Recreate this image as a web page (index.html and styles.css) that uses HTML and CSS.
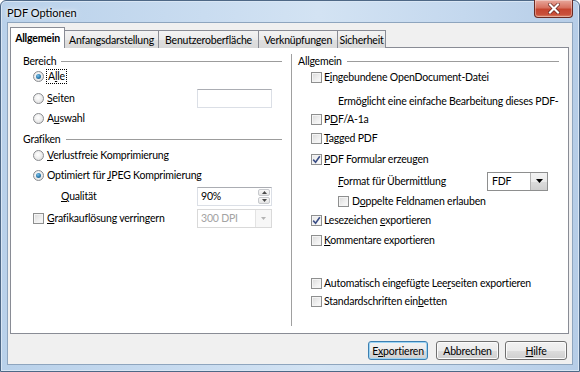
FILE: index.html
```html
<!DOCTYPE html>
<html>
<head>
<meta charset="utf-8">
<title>PDF Optionen</title>
<link rel="stylesheet" href="styles.css">
</head>
<body>
<div class="window">
  <div class="titlebar">
    <span class="title">PDF Optionen</span>
    <div class="close">
      <svg width="12" height="11" viewBox="0 0 12 11"><path d="M2 1.5 L10 9.5 M10 1.5 L2 9.5" stroke="#5a1a14" stroke-width="3.4" stroke-linecap="square"/><path d="M2 1.5 L10 9.5 M10 1.5 L2 9.5" stroke="#fff" stroke-width="2.2" stroke-linecap="square"/></svg>
    </div>
  </div>
  <div class="client">
    <div class="tabs">
      <div class="tab tab-a active">Allgemein</div>
      <div class="tab tab-b">Anfangsdarstellung</div>
      <div class="tab tab-c">Benutzeroberfläche</div>
      <div class="tab tab-d">Verknüpfungen</div>
      <div class="tab tab-e">Sicherheit</div>
    </div>
    <div class="panel">
      <div class="col col-left">
        <div class="hdr"><span>Bereich</span><i></i></div>
        <div class="row item"><span class="radio on"></span><span class="focus">A<u>l</u>le</span></div>
        <div class="row item"><span class="radio"></span><span class="lbl"><u>S</u>eiten</span><span class="edit"></span></div>
        <div class="row item"><span class="radio"></span><span class="lbl">A<u>u</u>swahl</span></div>
        <div class="hdr"><span>Grafiken</span><i></i></div>
        <div class="row item"><span class="radio"></span><span class="lbl"><u>V</u>erlustfreie Komprimierung</span></div>
        <div class="row item"><span class="radio on"></span><span class="lbl">Optimiert für <u>J</u>PEG Komprimierung</span></div>
        <div class="row item sub"><span class="lbl"><u>Q</u>ualität</span>
          <span class="spin"><span class="spin-val">90%</span><span class="spin-btns"><span class="sb"><svg width="5" height="3" viewBox="0 0 5 3"><path d="M0 3 L2.5 0 L5 3Z" fill="#4a4a4a"/></svg></span><span class="sb"><svg width="5" height="3" viewBox="0 0 5 3"><path d="M0 0 L2.5 3 L5 0Z" fill="#4a4a4a"/></svg></span></span></span>
        </div>
        <div class="row item"><span class="check"></span><span class="lbl"><u>G</u>rafikauflösung verringern</span>
          <span class="combo disabled"><span class="combo-val">300 DPI</span><span class="combo-btn"><svg width="5" height="3" viewBox="0 0 5 3"><path d="M0 0 L2.5 3 L5 0Z" fill="#b4b4b4"/></svg></span></span>
        </div>
      </div>
      <div class="sep"></div>
      <div class="col col-right">
        <div class="hdr"><span>Allgemein</span><i></i></div>
        <div class="row item"><span class="check"></span><span class="lbl">E<u>i</u>ngebundene OpenDocument-Datei</span></div>
        <div class="row item indent"><span class="lbl">Ermöglicht eine einfache Bearbeitung dieses PDF-</span></div>
        <div class="row item"><span class="check"></span><span class="lbl">P<u>D</u>F/A-1a</span></div>
        <div class="row item"><span class="check"></span><span class="lbl"><u>T</u>agged PDF</span></div>
        <div class="row item"><span class="check on"><svg width="9" height="9" viewBox="0 0 9 9"><path d="M1.2 4.6 L3.6 7.2 L7.8 1.2" fill="none" stroke="#3b4e86" stroke-width="1.6"/></svg></span><span class="lbl"><u>P</u>DF Formular erzeugen</span></div>
        <div class="row item indent"><span class="lbl"><u>F</u>ormat für Übermittlung</span>
          <span class="combo fdf"><span class="combo-val">FDF</span><span class="combo-btn"><svg width="7" height="4" viewBox="0 0 7 4"><path d="M0 0 L3.5 4 L7 0Z" fill="#000"/></svg></span></span>
        </div>
        <div class="row item indent"><span class="check"></span><span class="lbl">D<u>o</u>ppelte Feldnamen erlauben</span></div>
        <div class="row item"><span class="check on"><svg width="9" height="9" viewBox="0 0 9 9"><path d="M1.2 4.6 L3.6 7.2 L7.8 1.2" fill="none" stroke="#3b4e86" stroke-width="1.6"/></svg></span><span class="lbl">Lesezeichen <u>e</u>xportieren</span></div>
        <div class="row item"><span class="check"></span><span class="lbl"><u>K</u>ommentare exportieren</span></div>
        <div class="row item"><span class="check"></span><span class="lbl">Automatisch eingefügte Lee<u>r</u>seiten exportieren</span></div>
        <div class="row item"><span class="check"></span><span class="lbl">Standardschriften ein<u>b</u>etten</span></div>
      </div>
    </div>
    <div class="buttons">
      <div class="btn btn-default btn-exp">E<u>x</u>portieren</div>
      <div class="btn btn-abb">Abbrechen</div>
      <div class="btn btn-hilfe"><u>H</u>ilfe</div>
    </div>
  </div>
</div>
</body>
</html>
```
FILE: styles.css
```css
* { box-sizing: border-box; }
html, body { margin: 0; padding: 0; }
body {
  width: 580px;
  height: 372px;
  overflow: hidden;
  font-family: Lato, "Noto Sans", sans-serif;
  font-size: 10.5px;
  letter-spacing: -0.2px;
  color: #000;
  background: #fff;
}
u { text-decoration: underline; text-underline-offset: 1px; }

.window {
  width: 580px;
  height: 372px;
  display: flex;
  flex-direction: column;
  border: 1px solid #4e6886;
  border-radius: 6px 6px 0 0;
  background: linear-gradient(90deg, #b9d1ea 0%, #c9dcf0 35%, #d3e3f3 55%, #c4d8ee 80%, #b6cde7 100%);
  box-shadow: inset 0 0 0 1px #d9e6f4;
}
.titlebar {
  height: 21px;
  display: flex;
  align-items: flex-start;
  justify-content: space-between;
  flex: none;
}
.title {
  margin: 5px 0 0 6px;
  font-size: 11px;
  letter-spacing: 0;
  color: #000;
  text-shadow: 0 0 6px #fff, 0 0 3px #fff;
}
.close {
  width: 39px;
  height: 18px;
  margin: -1px 6px 0 0;
  border: 1px solid #6a2a22;
  border-top: none;
  border-radius: 0 0 4px 4px;
  background: linear-gradient(180deg, #e8a89c 0%, #d7715f 45%, #c5452f 55%, #c9503a 85%, #dc8a6c 100%);
  box-shadow: inset 0 0 0 1px rgba(255,255,255,0.35);
  display: flex;
  align-items: center;
  justify-content: center;
}

.client {
  flex: 1;
  margin: 0 6px 6px 6px;
  border: 1px solid #8ea5be;
  background: #f0f0f0;
  padding: 5px 3px 0 2px;
  display: flex;
  flex-direction: column;
}
.tabs {
  height: 20px;
  display: flex;
  align-items: flex-end;
  position: relative;
  z-index: 1;
  margin-bottom: -1px;
  flex: none;
}
.tab {
  height: 18px;
  border: 1px solid #898c95;
  border-bottom: none;
  background: linear-gradient(180deg, #f3f3f3 0%, #ebebeb 50%, #dfdfdf 51%, #d9d9d9 100%);
  display: flex;
  align-items: center;
  justify-content: center;
  margin-left: -1px;
  white-space: nowrap;
  flex: none;
}
.tab-a { width: 55px; margin-left: 0; }
.tab-b { width: 95px; }
.tab-c { width: 101px; }
.tab-d { width: 80px; }
.tab-e { width: 49px; }
.tab.active {
  height: 21px;
  background: #fff;
  font-weight: 700;
  position: relative;
  z-index: 2;
  padding-bottom: 1px;
}

.panel {
  height: 287px;
  flex: none;
  border: 1px solid #898c95;
  background: #fff;
  display: flex;
}
.col { display: grid; align-content: start; }
.col-left {
  width: 280px;
  flex: none;
  padding: 5px 9px 0 0;
  grid-template-rows: 15px 22px 20px 21px 16px 20px 21px 22px 16px;
}
.col-right {
  flex: 1;
  min-width: 0;
  padding: 5px 9px 0 0;
  grid-template-rows: 16px 24px 18px 19px 21px 22px 20px 19px 20px 43px 18px 16px;
}
.sep {
  width: 1px;
  background: #a0a0a0;
  margin: 6px 0 7px 0;
  flex: none;
}
.hdr {
  height: 16px;
  display: flex;
  align-items: center;
  white-space: nowrap;
}
.col-left .hdr { padding-left: 12px; }
.col-right .hdr { padding-left: 6px; }
.hdr i {
  flex: 1;
  height: 1px;
  background: #9c9c9c;
  margin-left: 5px;
}
.row {
  height: 16px;
  display: flex;
  align-items: center;
  white-space: nowrap;
  min-width: 0;
}
.col-left .item { padding-left: 22px; }
.col-right .item { padding-left: 19px; }
.col-left .item.sub { padding-left: 50px; }
.col-right .item.indent { padding-left: 46px; }
.lbl { flex: 1; min-width: 0; }
.focus {
  outline: 1px dotted #000;
  outline-offset: 0;
  padding: 0 1px;
  line-height: 13px;
}

.radio {
  width: 11px;
  height: 11px;
  border-radius: 50%;
  border: 1px solid #8a8c90;
  background: radial-gradient(circle at 45% 40%, #ffffff 0%, #f1f1f1 40%, #d6d6d6 100%);
  margin-right: 3px;
  flex: none;
  display: flex;
  align-items: center;
  justify-content: center;
}
.radio.on::after {
  content: "";
  width: 5px;
  height: 5px;
  border-radius: 50%;
  background: radial-gradient(circle at 40% 35%, #7ec2ea 0%, #2f7fb3 50%, #1d4f72 100%);
}

.check {
  width: 11px;
  height: 11px;
  border: 1px solid #8e8f8f;
  background: linear-gradient(135deg, #d9d9d9 0%, #f0f0f0 60%, #fbfbfb 100%);
  box-shadow: inset 0 0 0 1px #f4f4f4;
  margin-right: 2px;
  flex: none;
  display: flex;
  align-items: center;
  justify-content: center;
}
.check.on { background: linear-gradient(135deg, #e6e6e6 0%, #f6f6f6 60%, #ffffff 100%); }
.col-left .check { margin-right: 3px; }
.col-right .indent .check { margin-right: 3px; }

.edit {
  width: 75px;
  height: 19px;
  margin-right: 10px;
  border: 1px solid #dbdfe6;
  border-top-color: #abadb3;
  background: #fff;
  flex: none;
}
.spin {
  width: 75px;
  height: 19px;
  margin-right: 10px;
  border: 1px solid #dbdfe6;
  border-top-color: #abadb3;
  background: #fff;
  display: flex;
  align-items: center;
  flex: none;
}
.spin-val { flex: 1; padding-left: 3px; }
.spin-btns {
  width: 13px;
  height: 100%;
  display: flex;
  flex-direction: column;
  padding: 1px 1px 1px 0;
  gap: 1px;
}
.sb {
  flex: 1;
  border: 1px solid #c7c9cd;
  border-radius: 2px;
  background: linear-gradient(180deg, #f8f8f8, #e4e4e4);
  display: flex;
  align-items: center;
  justify-content: center;
}
.combo {
  height: 19px;
  display: flex;
  align-items: center;
  background: #fff;
  flex: none;
}
.combo-val { flex: 1; padding-left: 3px; }
.combo.disabled {
  width: 75px;
  margin-right: 10px;
  border: 1px solid #d9d9d9;
  color: #a3a3a3;
}
.combo.disabled .combo-btn {
  width: 16px;
  height: 100%;
  border-left: 1px solid #e3e3e3;
  background: #f7f7f7;
  display: flex;
  align-items: center;
  justify-content: center;
}
.combo.fdf {
  width: 61px;
  margin-right: 11px;
  border: 1px solid #8e8f8f;
}
.combo.fdf .combo-val { padding-left: 4px; }
.combo.fdf .combo-btn {
  width: 17px;
  height: 100%;
  border-left: 1px solid #b4b4b4;
  background: linear-gradient(180deg, #f2f2f2 0%, #ebebeb 50%, #dcdcdc 51%, #cfcfcf 100%);
  display: flex;
  align-items: center;
  justify-content: center;
}

.buttons {
  margin-top: 7px;
  height: 19px;
  display: flex;
  justify-content: flex-end;
  padding-right: 2px;
  flex: none;
}
.btn {
  height: 19px;
  border: 1px solid #707070;
  border-radius: 3px;
  background: linear-gradient(180deg, #f2f2f2 0%, #ebebeb 50%, #dddddd 51%, #cfcfcf 100%);
  box-shadow: inset 0 0 0 1px #fbfbfb;
  display: flex;
  align-items: center;
  justify-content: center;
  white-space: nowrap;
}
.btn-exp { width: 60px; }
.btn-abb { width: 63px; margin-left: 8px; }
.btn-hilfe { width: 62px; margin-left: 6px; }
.btn-default {
  border-color: #3c7fb1;
  box-shadow: inset 0 0 0 1px #9cd4f4;
}
```
